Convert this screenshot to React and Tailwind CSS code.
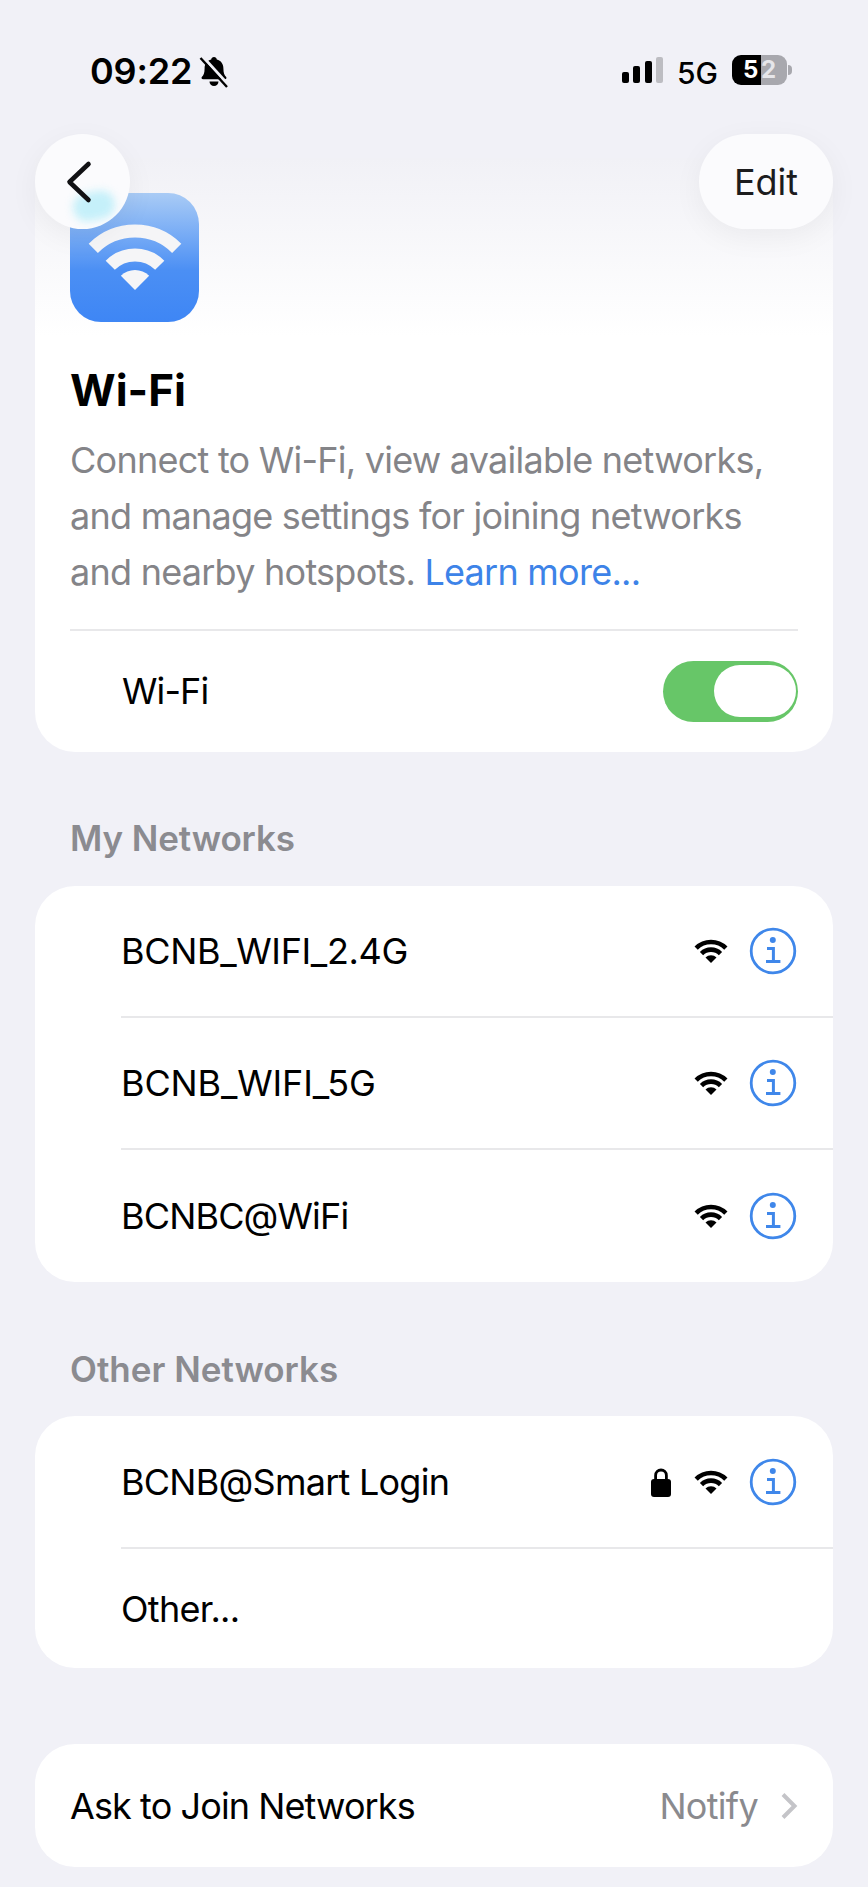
import React from "react";

function arc(cx, cy, r) {
  const s = r * Math.SQRT1_2;
  return `M${cx - s} ${cy - s}A${r} ${r} 0 0 1 ${cx + s} ${cy - s}`;
}
function sector(cx, cy, r) {
  const s = r * Math.SQRT1_2;
  return `M${cx} ${cy}L${cx - s} ${cy - s}A${r} ${r} 0 0 1 ${cx + s} ${cy - s}Z`;
}

function SmallWifi() {
  return (
    <svg width="34" height="24" viewBox="0 0 34 24" fill="none" className="shrink-0">
      <path d={arc(17, 24, 21)} stroke="#000" strokeWidth="4.6" />
      <path d={arc(17, 24, 13.400)} stroke="#000" strokeWidth="4.6" />
      <path d={sector(17, 24, 7.8)} fill="#000" />
    </svg>
  );
}

function InfoIcon() {
  return (
    <svg width="48" height="48" viewBox="0 0 48 48" fill="none" className="shrink-0">
      <circle cx="24" cy="24" r="21.8" stroke="#3f87ea" strokeWidth="2.8" />
      <circle cx="23.8" cy="13" r="3" fill="#3f87ea" />
      <path d="M18 21.4h6.4v13M17 34.6h14.4" stroke="#3f87ea" strokeWidth="3" />
    </svg>
  );
}

function NetworkRow({ name, lock, first, h, track }) {
  return (
    <div className={`ml-[86px] flex items-center pr-[36px] ${h} ${first ? "" : "border-t-2 border-[#e8e8ea]"}`}>
      <span className={`flex-1 text-[36px] text-black ${track}`}>{name}</span>
      {lock && (
        <svg width="20" height="30" viewBox="0 0 20 30" className="mr-[23px] shrink-0">
          <path d="M4.6 13V8.4a5.4 5.4 0 0 1 10.8 0V13" fill="none" stroke="#000" strokeWidth="2.8" />
          <rect x="0" y="12" width="20" height="18" rx="3" fill="#000" />
        </svg>
      )}
      <SmallWifi />
      <span className="ml-[21px] flex"><InfoIcon /></span>
    </div>
  );
}

function BellSlash() {
  return (
    <svg width="30" height="32" viewBox="0 0 30 32" className="shrink-0">
      <path d="M15 1c1.500 0 2.700 1 2.800 2.400 4.200 1 6.600 4.500 6.600 9 0 4.500 1 6.500 2.600 8.300 1 1.100.3 2.600-1.100 2.600H4.100c-1.400 0-2.100-1.500-1.100-2.600 1.600-1.800 2.600-3.800 2.600-8.300 0-4.500 2.400-8 6.600-9C12.300 2 13.500 1 15 1Z" fill="#000" />
      <path d="M10.500 25.500h9a4.500 4.500 0 0 1-9 0Z" fill="#000" />
      <path d="M3.500 .5 30 29.500" stroke="#f0f0f5" strokeWidth="3" />
      <path d="M1.500 2 28 31" stroke="#000" strokeWidth="2.400" />
    </svg>
  );
}

export default function App() {
  return (
    <div className="relative h-[1887px] w-[868px] overflow-hidden bg-[#f1f1f7] [font-family:Inter,'Liberation_Sans',sans-serif]">
      {/* status bar */}
      <div className="flex h-[158px] items-start pl-[90px] pr-[76px] pt-[53px]">
        <span className="text-[36px] leading-[36px] font-semibold text-black tracking-[-0.2px]">09:22</span>
        <span className="ml-[7px] mt-[3px] flex"><BellSlash /></span>
        <div className="flex-1" />
        <div className="mt-[4px] flex items-end gap-[4.500px]">
          <span className="h-[11px] w-[7px] rounded-[2px] bg-black" />
          <span className="h-[17px] w-[7px] rounded-[2px] bg-black" />
          <span className="h-[22px] w-[7px] rounded-[2px] bg-black" />
          <span className="h-[26px] w-[7px] rounded-[2px] bg-[#bdbdc2]" />
        </div>
        <span className="ml-[14px] mt-[2px] text-[30px] leading-[36px] font-medium text-black">5G</span>
        <div className="ml-[14px] mt-[2px] flex items-center">
          <div className="flex h-[30px] w-[55px] overflow-hidden rounded-[9px] text-[24px] leading-[30px] font-bold">
            <span className="w-[29px] bg-black pl-[11px] text-white">5</span>
            <span className="flex-1 bg-[#a8a8ae] text-[#e6e6ea]">2</span>
          </div>
          <span className="ml-[1px] h-[10px] w-[4px] rounded-r-full bg-[#a8a8ae]" />
        </div>
      </div>

      <div className="px-[35px]">
        {/* wi-fi card */}
        <div className="h-[594px] rounded-b-[40px] bg-gradient-to-b from-[#f1f1f6] via-white via-[30%] to-white px-[35px] pt-[35px]">
          <div className="flex h-[129px] w-[129px] rounded-[31px] bg-gradient-to-b from-[#a9cbf5] via-[#4b8ff4] via-[60%] to-[#3e86f5]">
            <svg width="129" height="129" viewBox="0 0 129 129" fill="none">
              <path d={arc(65, 97, 59)} stroke="#f5f5f7" strokeWidth="13" />
              <path d={arc(65, 97, 35)} stroke="#f5f5f7" strokeWidth="13" />
              <path d={sector(65, 97, 20)} fill="#f5f5f7" />
            </svg>
          </div>
          <h1 className="mt-[42px] text-[44px] leading-[52px] font-bold text-black">Wi-Fi</h1>
          <p className="mt-[16px] text-[36px] leading-[56px] text-[#848488] tracking-[-0.75px]">
            Connect to Wi-Fi, view available networks,
            <br />
            and manage settings for joining networks
            <br />
            and nearby hotspots. <span className="text-[#3d83e8]">Learn more...</span>
          </p>
          <div className="mt-[29px] flex h-[122px] items-center border-t-2 border-[#e8e8ea] pl-[52px]">
            <span className="flex-1 text-[36px] text-black tracking-[-0.9px]">Wi-Fi</span>
            <div className="flex h-[61px] w-[135px] items-center justify-end rounded-full bg-[#67c668] pr-[2px]">
              <span className="h-[52px] w-[82px] rounded-full bg-white" />
            </div>
          </div>
        </div>

        <h2 className="mt-[68px] pl-[35px] text-[35px] leading-[36px] font-semibold text-[#8b8b90] tracking-[-0.1px]">My Networks</h2>
        <div className="mt-[30px] overflow-hidden rounded-[40px] bg-white">
          <NetworkRow first h="h-[130px]" track="tracking-[-0.35px]" name="BCNB_WIFI_2.4G" />
          <NetworkRow h="h-[132px]" track="tracking-[-0.15px]" name="BCNB_WIFI_5G" />
          <NetworkRow h="h-[134px]" track="tracking-[-0.85px]" name="BCNBC@WiFi" />
        </div>

        <h2 className="mt-[69px] pl-[35px] text-[35px] leading-[36px] font-semibold text-[#8b8b90]">Other Networks</h2>
        <div className="mt-[29px] overflow-hidden rounded-[40px] bg-white">
          <NetworkRow first h="h-[131px]" track="tracking-[-0.75px]" name="BCNB@Smart Login" lock />
          <div className="ml-[86px] flex h-[121px] items-center border-t-2 border-[#e8e8ea]">
            <span className="text-[36px] text-black tracking-[-0.7px]">Other...</span>
          </div>
        </div>

        <div className="mt-[76px] flex h-[123px] items-center rounded-[40px] bg-white pl-[35px] pr-[35px]">
          <span className="flex-1 text-[36px] text-black tracking-[-0.9px]">Ask to Join Networks</span>
          <span className="text-[36px] text-[#8a8a8e] tracking-[-0.7px]">Notify</span>
          <svg width="18" height="28" viewBox="0 0 18 28" fill="none" className="ml-[22px]">
            <path d="M3 2.500 14.500 14 3 25.500" stroke="#c4c4c8" strokeWidth="4" />
          </svg>
        </div>
      </div>

      {/* floating nav buttons */}
      <div className="absolute left-[35px] top-[134px] flex h-[95px] w-[95px] items-center justify-center overflow-hidden rounded-full bg-[#fbfbfd] shadow-[0_8px_30px_rgba(0,0,0,0.05)]">
        <span className="absolute left-[38px] top-[58px] h-[28px] w-[42px] -rotate-12 rounded-full bg-[#c5f0fa] blur-[4px]" />
        <svg width="28" height="46" viewBox="0 0 28 46" fill="none" className="relative -ml-[7px]">
          <path d="M23.500 5 4.500 23l19 18" stroke="#111114" strokeWidth="4.600" strokeLinecap="round" strokeLinejoin="round" />
        </svg>
      </div>
      <div className="absolute left-[699px] top-[134px] flex h-[95px] w-[134px] items-center justify-center rounded-full bg-[#fbfbfd] text-[36px] text-[#1c1c1e] shadow-[0_8px_30px_rgba(0,0,0,0.05)]">
        Edit
      </div>
    </div>
  );
}
